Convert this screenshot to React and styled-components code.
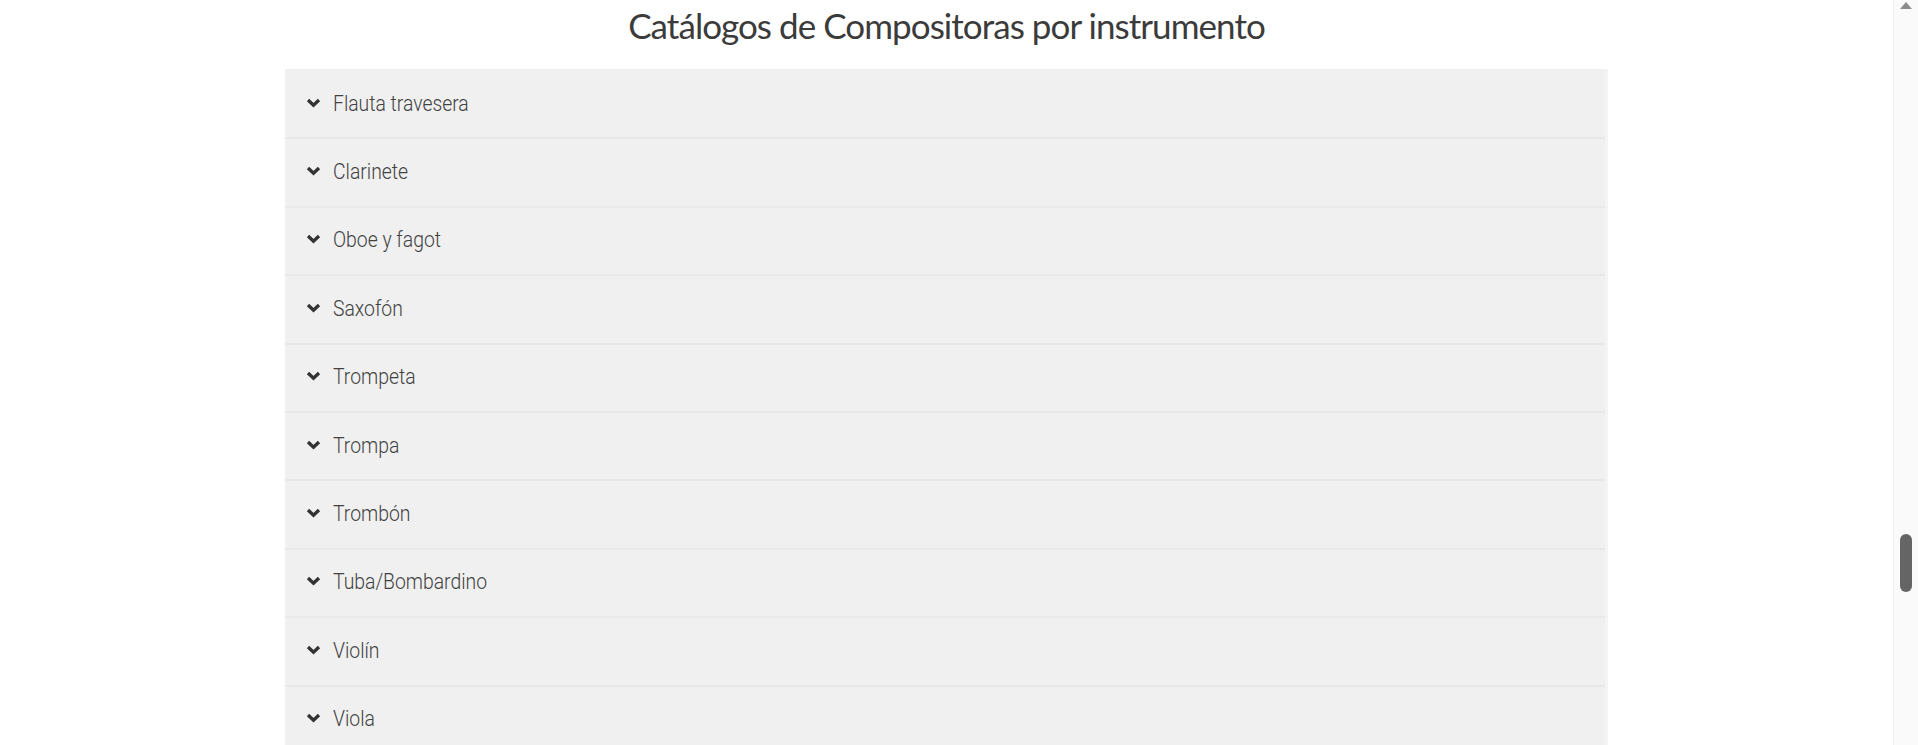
import React from "react";
import styled, { createGlobalStyle } from "styled-components";

const GlobalStyle = createGlobalStyle`
  html, body {
    margin: 0;
    padding: 0;
    background: #ffffff;
    overflow: hidden;
  }
`;

const instrumentos = [
  "Flauta travesera",
  "Clarinete",
  "Oboe y fagot",
  "Saxofón",
  "Trompeta",
  "Trompa",
  "Trombón",
  "Tuba/Bombardino",
  "Violín",
  "Viola",
];

const Chevron = () => (
  <ChevronIcon viewBox="0 0 15 10" aria-hidden="true">
    <polyline points="2,2 7.5,7.3 13,2" />
  </ChevronIcon>
);

export default function App() {
  return (
    <Page>
      <GlobalStyle />
      <Main>
        <Title>Catálogos de Compositoras por instrumento</Title>
        <Accordion>
          {instrumentos.map((nombre, i) => (
            <Item key={nombre} $first={i === 0}>
              <Chevron />
              <Label>{nombre}</Label>
            </Item>
          ))}
        </Accordion>
      </Main>
      <Scrollbar>
        <ArrowUp />
        <Track>
          <Thumb />
        </Track>
      </Scrollbar>
    </Page>
  );
}

const Page = styled.div`
  display: flex;
  height: 745px;
  overflow: hidden;
`;

const Main = styled.main`
  flex: 1;
  display: flex;
  flex-direction: column;
  align-items: center;
  overflow: hidden;
`;

const Title = styled.h2`
  margin: 0;
  height: 69px;
  flex-shrink: 0;
  box-sizing: border-box;
  padding-top: 2px;
  font-family: "Lato", "Open Sans", sans-serif;
  font-weight: 400;
  font-size: 35px;
  line-height: 46px;
  color: #3b3b3b;
  letter-spacing: -0.95px;
`;

const Accordion = styled.div`
  width: 1323px;
  flex-shrink: 0;
  display: flex;
  flex-direction: column;
  border-right: 3px solid #f4f4f4;
  box-sizing: border-box;
`;

const Item = styled.div`
  height: 68.4px;
  box-sizing: border-box;
  display: flex;
  align-items: center;
  gap: 12px;
  padding-left: 21px;
  background: #f0f0f0;
  border-top: 2px solid ${(p) => (p.$first ? "#f0f0f0" : "#e8e8e8")};
  flex-shrink: 0;
`;

const ChevronIcon = styled.svg`
  width: 15px;
  height: 10px;
  flex-shrink: 0;
  margin-bottom: 3px;

  polyline {
    fill: none;
    stroke: #333333;
    stroke-width: 3.3;
    stroke-linecap: butt;
    stroke-linejoin: miter;
  }
`;

const Label = styled.span`
  display: inline-block;
  font-family: "Roboto", "Liberation Sans", sans-serif;
  font-weight: 300;
  font-size: 22px;
  color: #424242;
  padding-bottom: 2px;
  transform: scaleX(0.88);
  transform-origin: left center;
`;

const Scrollbar = styled.div`
  width: 24px;
  flex-shrink: 0;
  display: flex;
  flex-direction: column;
  align-items: center;
  background: #fafafa;
  border-left: 1px solid #f0f0f0;
`;

const ArrowUp = styled.div`
  width: 0;
  height: 0;
  margin-top: 2px;
  border-left: 6px solid transparent;
  border-right: 6px solid transparent;
  border-bottom: 7px solid #8c8c8c;
`;

const Track = styled.div`
  flex: 1;
  display: flex;
  flex-direction: column;
  align-items: center;
  padding-top: 525px;
`;

const Thumb = styled.div`
  width: 12px;
  height: 58px;
  border-radius: 6px;
  background: #656565;
`;
